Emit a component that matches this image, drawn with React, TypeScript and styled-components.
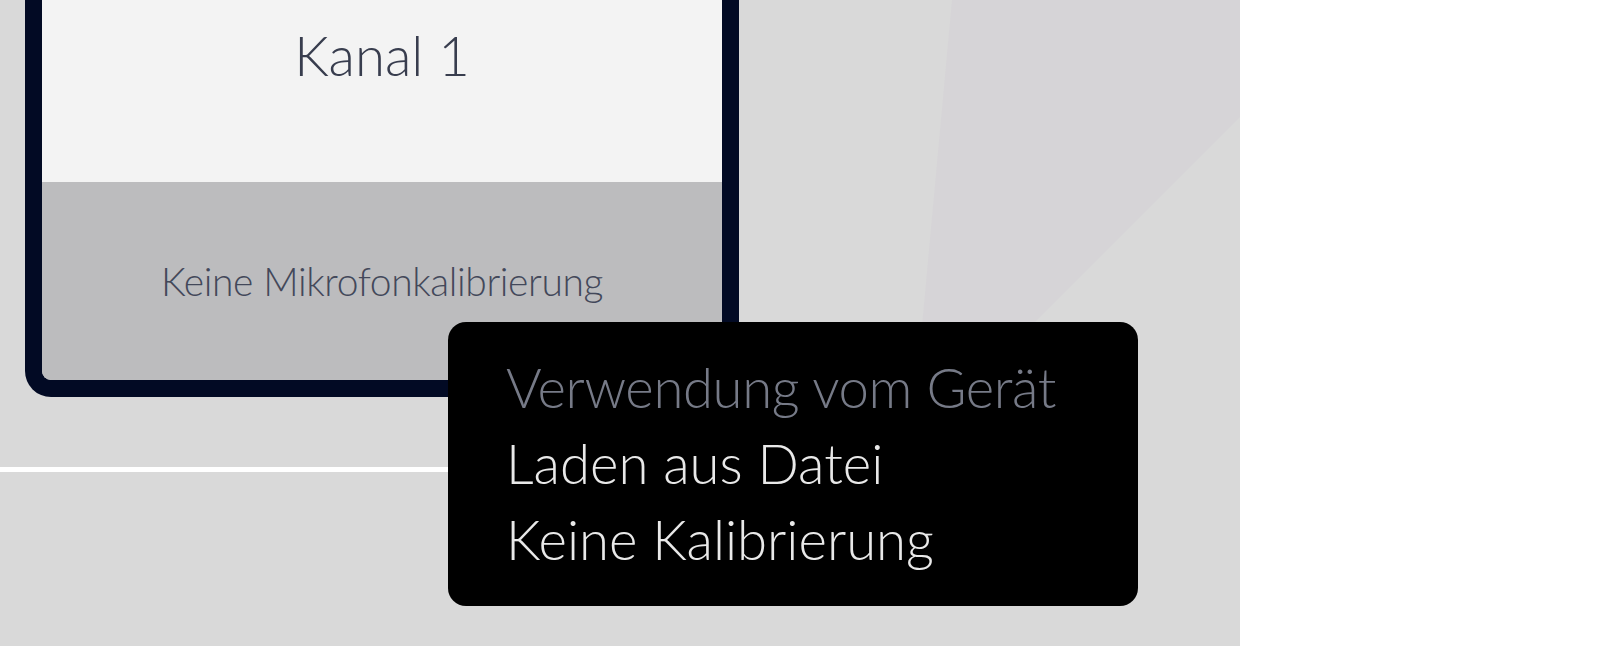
import React from 'react';
import styled, { createGlobalStyle } from 'styled-components';

const GlobalStyle = createGlobalStyle`
  html, body {
    margin: 0;
    padding: 0;
    overflow: hidden;
  }

  body {
    font-family: Lato, "Open Sans", sans-serif;
  }
`;

const Page = styled.div`
  display: flex;
  height: 646px;
  width: 100%;
`;

const Main = styled.main`
  background-color: #d9d9d9;
  flex: 0 0 1240px;
  overflow: hidden;
  position: relative;
`;

const Side = styled.aside`
  background-color: #fff;
  flex: 1;
`;

// faint facet shape behind the content
const Backdrop = styled.svg`
  height: 100%;
  left: 0;
  pointer-events: none;
  position: absolute;
  top: 0;
  width: 100%;
`;

const ChannelSection = styled.section`
  border-bottom: 5px solid #fff;
  box-sizing: border-box;
  height: 472px;
  padding-left: 25px;
  position: relative;
  width: 740px;
`;

const Card = styled.div`
  border: 17px solid #020a24;
  border-radius: 0 0 26px 26px;
  border-top: 0;
  box-sizing: border-box;
  display: flex;
  flex-direction: column;
  overflow: hidden;
  width: 714px;
`;

const CardHead = styled.div`
  background-color: #f3f3f3;
  box-sizing: border-box;
  color: #383d4e;
  font-size: 54.5px;
  font-weight: 300;
  height: 182px;
  line-height: 1.2;
  padding-top: 23px;
  text-align: center;
`;

const CardFoot = styled.div`
  background-color: #bcbcbe;
  box-sizing: border-box;
  color: #43485a;
  font-size: 39px;
  font-weight: 300;
  height: 198px;
  letter-spacing: -0.4px;
  line-height: 1.2;
  padding-top: 76px;
  text-align: center;
`;

const Menu = styled.ul`
  background-color: #000;
  border-radius: 18px;
  box-sizing: border-box;
  height: 284px;
  left: 448px;
  list-style: none;
  margin: 0;
  padding: 27px 0 0 58px;
  position: absolute;
  top: 322px;
  width: 690px;
`;

const MenuItem = styled.li<{ $disabled?: boolean }>`
  color: ${({ $disabled }) => ($disabled ? '#767a87' : '#e9e9e9')};
  cursor: ${({ $disabled }) => ($disabled ? 'default' : 'pointer')};
  font-size: 54.5px;
  font-weight: 300;
  letter-spacing: ${({ $disabled }) => ($disabled ? '-0.4px' : '0')};
  line-height: 76px;
  white-space: nowrap;
`;

const options = [
  { label: 'Verwendung vom Gerät', disabled: true },
  { label: 'Laden aus Datei', disabled: false },
  { label: 'Keine Kalibrierung', disabled: false },
];

const App = () => (
  <>
    <GlobalStyle />
    <Page>
      <Main>
        <Backdrop viewBox="0 0 1240 646" preserveAspectRatio="none">
          <polygon points="952,0 1240,0 1240,117 911,446" fill="#d6d4d7" />
        </Backdrop>
        <ChannelSection>
          <Card>
            <CardHead>Kanal 1</CardHead>
            <CardFoot>Keine Mikrofonkalibrierung</CardFoot>
          </Card>
        </ChannelSection>
        <Menu>
          {options.map((option) => (
            <MenuItem key={option.label} $disabled={option.disabled}>
              {option.label}
            </MenuItem>
          ))}
        </Menu>
      </Main>
      <Side />
    </Page>
  </>
);

export default App;
